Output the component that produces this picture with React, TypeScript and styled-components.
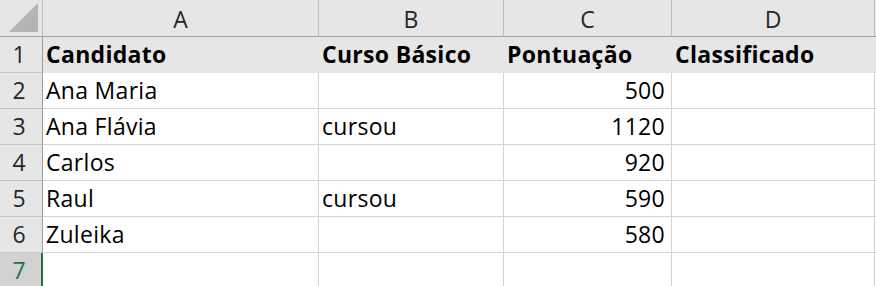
import React from 'react';
import styled, { createGlobalStyle } from 'styled-components';

const GlobalStyle = createGlobalStyle`
    html, body {
        margin: 0;
        padding: 0;
        background: #ffffff;
    }

    body {
        font-family: "Open Sans", Lato, "Liberation Sans", sans-serif;
        color: #000000;
    }
`;

const COLUMNS = ['A', 'B', 'C', 'D'];

const Grid = styled.div`
    display: grid;
    grid-template-columns: 43px 276px 185px 168px 203px 1fr;
    grid-auto-rows: 36px;
    grid-template-rows: 37px;
    width: 876px;
    height: 286px;
    overflow: hidden;
    font-size: 23px;
    line-height: 26px;
`;

const Corner = styled.div`
    position: relative;
    background: #e6e6e6;
    border-right: 1px solid #bdbdbd;
    border-bottom: 1px solid #9e9e9e;
`;

const Triangle = styled.div`
    position: absolute;
    right: 4px;
    bottom: 4px;
    width: 0;
    height: 0;
    border-left: 29px solid transparent;
    border-bottom: 29px solid #b4b4b4;
`;

const ColHeader = styled.div`
    background: #e6e6e6;
    border-right: 1px solid #bdbdbd;
    border-bottom: 1px solid #9e9e9e;
    padding-top: 6px;
    text-align: center;
    color: #262626;
`;

const RowHeader = styled.div<{ $selected?: boolean }>`
    background: ${(p) => (p.$selected ? '#d2d2d2' : '#e6e6e6')};
    color: ${(p) => (p.$selected ? '#217346' : '#262626')};
    border-right: ${(p) => (p.$selected ? '2px solid #217346' : '1px solid #9e9e9e')};
    border-bottom: 1px solid #c6c6c6;
    padding-top: 4px;
    padding-right: ${(p) => (p.$selected ? '3px' : '4px')};
    text-align: center;
`;

const Cell = styled.div<{ $head?: boolean; $num?: boolean }>`
    background: ${(p) => (p.$head ? '#e7e6e6' : '#ffffff')};
    border-right: 1px solid ${(p) => (p.$head ? '#e7e6e6' : '#d4d4d4')};
    border-bottom: 1px solid ${(p) => (p.$head ? '#e7e6e6' : '#d4d4d4')};
    padding: 4px ${(p) => (p.$num ? '6px' : '4px')} 0 3px;
    font-weight: ${(p) => (p.$head ? 700 : 400)};
    letter-spacing: 0.3px;
    text-align: ${(p) => (p.$num ? 'right' : 'left')};
    white-space: nowrap;
    overflow: hidden;
`;

type Row = [string, string, string, string];

const ROWS: Row[] = [
    ['Candidato', 'Curso Básico', 'Pontuação', 'Classificado'],
    ['Ana Maria', '', '500', ''],
    ['Ana Flávia', 'cursou', '1120', ''],
    ['Carlos', '', '920', ''],
    ['Raul', 'cursou', '590', ''],
    ['Zuleika', '', '580', ''],
    ['', '', '', ''],
];

const App: React.FC = () => {
    return (
        <>
            <GlobalStyle />
            <Grid>
                <Corner>
                    <Triangle />
                </Corner>
                {COLUMNS.map((c) => (
                    <ColHeader key={c}>{c}</ColHeader>
                ))}
                <ColHeader />

                {ROWS.map((row, i) => {
                    const head = i === 0;
                    return (
                        <React.Fragment key={i}>
                            <RowHeader $selected={i === ROWS.length - 1}>{i + 1}</RowHeader>
                            {row.map((value, j) => (
                                <Cell key={j} $head={head} $num={!head && j === 2}>
                                    {value}
                                </Cell>
                            ))}
                            <Cell $head={head} />
                        </React.Fragment>
                    );
                })}
            </Grid>
        </>
    );
};

export default App;
